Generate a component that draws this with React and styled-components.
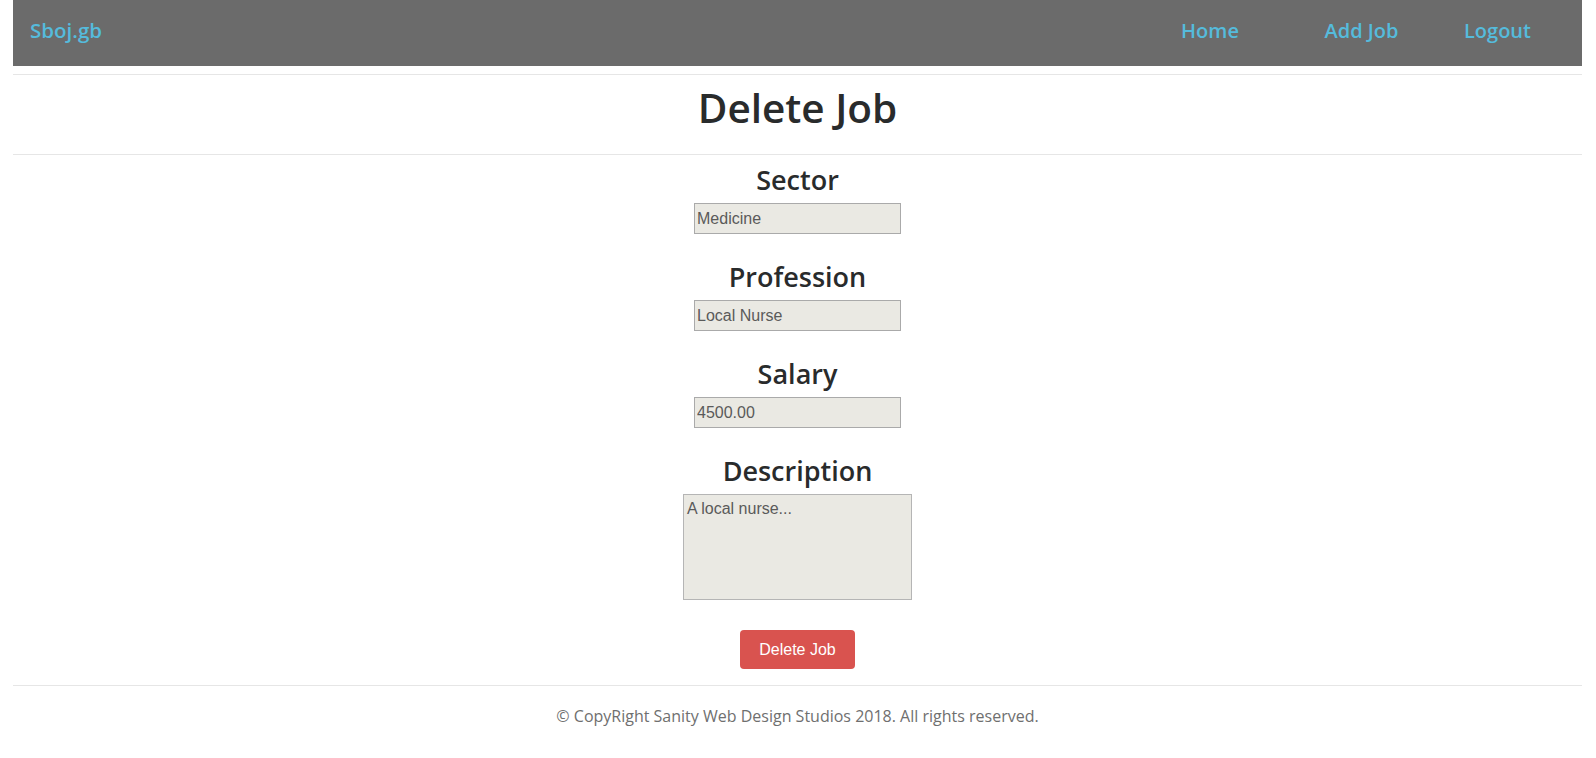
import React from "react";
import styled, { createGlobalStyle } from "styled-components";

const GlobalStyle = createGlobalStyle`
  body {
    margin: 0;
    background: #fff;
    font-family: "Open Sans", "Noto Sans", sans-serif;
    color: #212529;
  }
`;

const Page = styled.div`
  padding: 0 14px 0 13px;
`;

const Navbar = styled.nav`
  height: 66px;
  background: #6b6b6b;
  display: flex;
  align-items: center;
  justify-content: space-between;
  padding: 0 30px 6px 17px;
  box-sizing: border-box;
`;

const Brand = styled.a`
  color: #55bbdc;
  font-size: 20.5px;
  font-weight: 600;
  text-decoration: none;
`;

const NavList = styled.div`
  display: flex;
  align-items: center;
`;

const NavLink = styled.a`
  width: ${(p) => p.$width}px;
  text-align: center;
  color: #55bbdc;
  font-size: 20px;
  font-weight: 600;
  text-decoration: none;
`;

const Rule = styled.hr`
  border: 0;
  border-top: 1px solid #e6e6e6;
  margin: ${(p) => p.$top}px 0 ${(p) => p.$bottom}px;
`;

const Title = styled.h1`
  margin: 0;
  text-align: center;
  font-size: 40.5px;
  font-weight: 600;
  line-height: 48px;
  color: #292b2c;
`;

const Form = styled.form`
  display: flex;
  flex-direction: column;
  align-items: center;
`;

const Group = styled.div`
  display: flex;
  flex-direction: column;
  align-items: center;
  margin-bottom: ${(p) => p.$gap}px;
`;

const Label = styled.label`
  font-size: 27px;
  font-weight: 600;
  line-height: 34px;
  color: #292b2c;
  margin-bottom: 6px;
`;

const Field = styled.input`
  width: 207px;
  height: 31px;
  box-sizing: border-box;
  border: 1px solid #aaa;
  background: #eae9e3;
  color: #5a5a5a;
  font-family: "Liberation Sans", Arial, sans-serif;
  font-size: 16px;
  padding: 0 2px;
`;

const Area = styled.textarea`
  width: 229px;
  height: 106px;
  box-sizing: border-box;
  border: 1px solid #b5b5b5;
  background: #eae9e3;
  color: #5a5a5a;
  font-family: "Liberation Sans", Arial, sans-serif;
  font-size: 16px;
  padding: 5px 3px;
  resize: none;
`;

const DangerButton = styled.button`
  width: 115px;
  height: 39px;
  border: 0;
  border-radius: 4px;
  background: #d9534f;
  color: #fff;
  font-family: "Liberation Sans", Arial, sans-serif;
  font-size: 16px;
  cursor: pointer;
`;

const Footer = styled.footer`
  text-align: center;
  font-size: 16px;
  line-height: 22px;
  color: #6f6f6f;
`;

const fields = [
  { label: "Sector", value: "Medicine" },
  { label: "Profession", value: "Local Nurse" },
  { label: "Salary", value: "4500.00" },
];

export default function App() {
  return (
    <Page>
      <GlobalStyle />
      <Navbar>
        <Brand href="#">Sboj.gb</Brand>
        <NavList>
          <NavLink href="#" $width={140}>Home</NavLink>
          <NavLink href="#" $width={163}>Add Job</NavLink>
          <NavLink href="#" $width={109}>Logout</NavLink>
        </NavList>
      </Navbar>
      <Rule $top={8} $bottom={9} />
      <Title>Delete Job</Title>
      <Rule $top={22} $bottom={8} />
      <Form onSubmit={(e) => e.preventDefault()}>
        {fields.map((f) => (
          <Group key={f.label} $gap={26}>
            <Label>{f.label}</Label>
            <Field defaultValue={f.value} readOnly />
          </Group>
        ))}
        <Group $gap={30}>
          <Label>Description</Label>
          <Area defaultValue="A local nurse..." readOnly />
        </Group>
        <DangerButton type="submit">Delete Job</DangerButton>
      </Form>
      <Rule $top={16} $bottom={19} />
      <Footer>© CopyRight Sanity Web Design Studios 2018. All rights reserved.</Footer>
    </Page>
  );
}
